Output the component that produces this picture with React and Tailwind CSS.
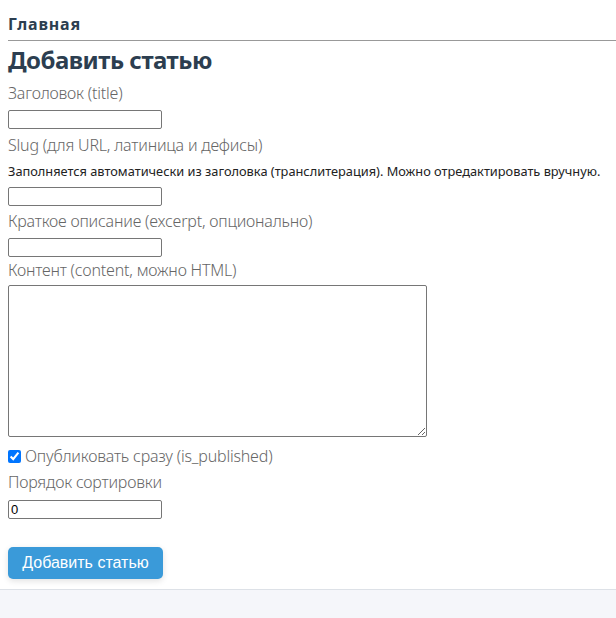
import React from "react";

const label = "block text-[16px] leading-[20px] font-light tracking-[-0.2px] text-[#666]";
const field = "block w-[154px] h-[19px] border border-[#767676] rounded-[2px] bg-white px-[2px] text-[13px] font-['Liberation_Sans',sans-serif] text-black";

export default function App() {
  return (
    <div className="min-h-[618px] bg-[#f5f6fa] font-['Noto_Sans',sans-serif]">
      <div className="bg-white pl-2 pb-[10px] border-b border-[#dde1e7]">
        <header className="pt-[12px] pb-[4px] border-b border-[#999]">
          <a className="text-[16px] leading-[20px] font-bold tracking-[0.8px] text-[#2c3e50]">Главная</a>
        </header>
        <h2 className="mt-[4px] text-[24px] leading-[30px] font-bold tracking-[-0.5px] text-[#2c3e50]">Добавить статью</h2>
        <form className="flex flex-col">
          <label className={`${label} mt-[8px]`}>Заголовок (title)</label>
          <input className={`${field} mt-[7px]`} type="text" />
          <label className={`${label} mt-[6px]`}>Slug (для URL, латиница и дефисы)</label>
          <p className="mt-[8px] text-[12.8px] leading-[16px] text-[#222]">
            Заполняется автоматически из заголовка (транслитерация). Можно отредактировать вручную.
          </p>
          <input className={`${field} mt-[8px]`} type="text" />
          <label className={`${label} mt-[5px]`}>Краткое описание (excerpt, опционально)</label>
          <input className={`${field} mt-[7px]`} type="text" />
          <label className={`${label} mt-[3px]`}>Контент (content, можно HTML)</label>
          <textarea className="block mt-[5px] w-[419px] h-[152px] border border-[#767676] rounded-[2px] bg-white resize" />
          <label className={`${label} mt-[9px] flex items-center`}>
            <input type="checkbox" defaultChecked className="w-[13px] h-[13px] mr-[4px] accent-[#0075ff]" />
            Опубликовать сразу (is_published)
          </label>
          <label className={`${label} mt-[6px]`}>Порядок сортировки</label>
          <input className={`${field} mt-[8px]`} type="text" defaultValue="0" />
          <div className="mt-[28px]">
            <button type="submit" className="w-[155px] h-[32px] rounded-[5px] bg-[#3a9ad9] text-white text-[16px] font-['Liberation_Sans',sans-serif] shadow-[0_2px_6px_rgba(0,0,0,0.12)]">
              Добавить статью
            </button>
          </div>
        </form>
      </div>
    </div>
  );
}
